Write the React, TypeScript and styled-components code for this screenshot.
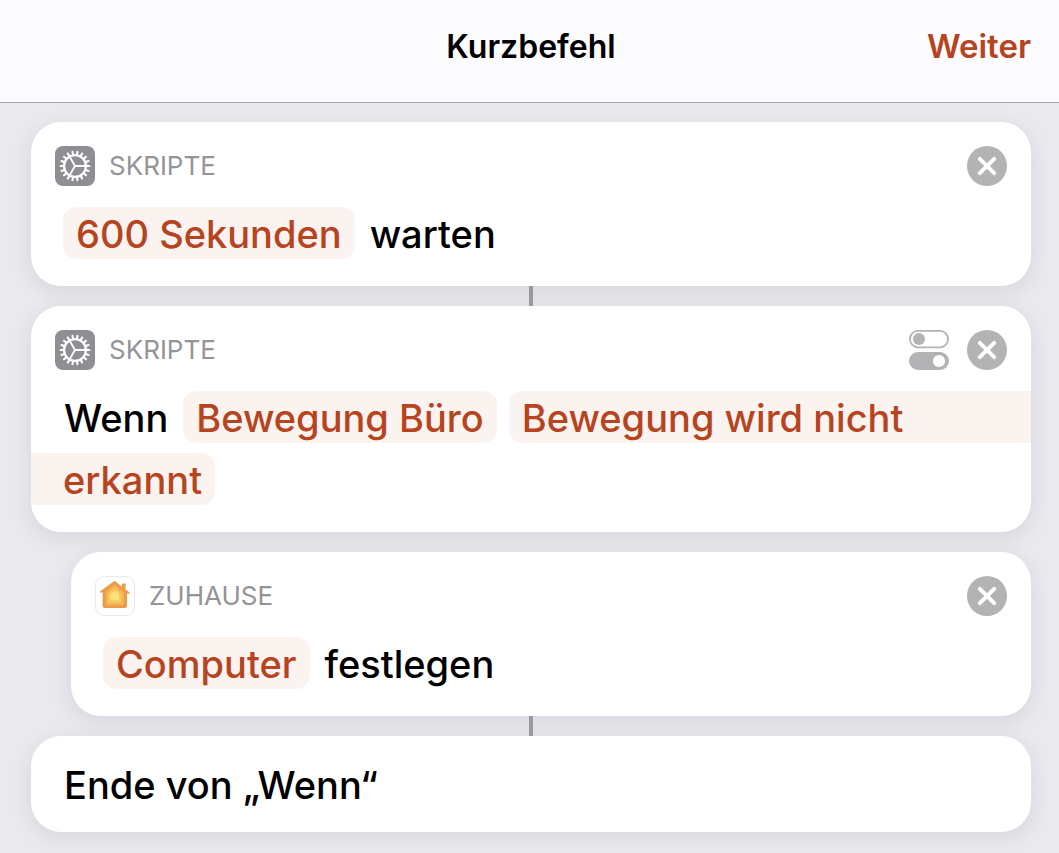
import React from "react";
import styled, { createGlobalStyle } from "styled-components";

const accent = "#b5441f";
const tint = "#fbf3ef";
const muted = "#b3b3b5";

const GlobalStyle = createGlobalStyle`
  *, *::before, *::after { box-sizing: border-box; }
  body {
    margin: 0;
    background: #e9e9ee;
    color: #000;
    font-family: Inter, "Liberation Sans", sans-serif;
  }
  button { border: 0; margin: 0; font: inherit; cursor: pointer; }
`;

const NavBar = styled.header`
  display: grid;
  grid-template-columns: 1fr auto 1fr;
  align-items: baseline;
  align-content: center;
  min-height: 103px;
  padding: 0 28px 10px 31px;
  background: #fcfcfe;
  border-bottom: 1px solid #a5a5aa;
`;

const Title = styled.h1`
  grid-column: 2;
  margin: 0;
  font-size: 32px;
  line-height: 40px;
  font-weight: 600;
`;

const NextButton = styled.button`
  justify-self: end;
  padding: 0;
  background: none;
  color: ${accent};
  && { font-size: 33px; line-height: 40px; font-weight: 600; }
`;

const Flow = styled.main`
  display: flex;
  flex-direction: column;
  padding: 19px 28px 21px 31px;
`;

const Card = styled.section<{ $nested?: boolean }>`
  margin-left: ${(p) => (p.$nested ? 40 : 0)}px;
  padding: 24px 24px 27px;
  border-radius: 30px;
  background: #fff;
  box-shadow: 0 5px 20px rgba(40, 40, 60, 0.1);
`;

const EndCard = styled(Card)`
  padding: 22px 24px;
`;

const Connector = styled.div<{ $line?: boolean }>`
  position: relative;
  align-self: center;
  width: 4px;
  height: 20px;
  background: ${(p) => (p.$line ? "#98989f" : "transparent")};
`;

const CardHeader = styled.header`
  display: flex;
  align-items: center;
  height: 40px;
  margin-bottom: 21px;
`;

const Category = styled.h2`
  flex: 1;
  margin: 0 0 0 14px;
  color: #949497;
  font-size: 26px;
  line-height: 40px;
  font-weight: 400;
`;

const IconButton = styled.button`
  display: flex;
  padding: 0;
  margin-left: 18px;
  background: none;
`;

const Statement = styled.p`
  display: flex;
  flex-wrap: wrap;
  gap: 10px 12px;
  margin: 0;
  padding: 0 8px;
  font-size: 38px;
  line-height: 50px;
  font-weight: 500;
`;

const Word = styled.span`
  padding: 2px 3px 0;
  &:first-child { padding-left: 1px; }
`;

const Chip = styled.button`
  padding: 2px 13px 0;
  border-radius: 14px;
  background: ${tint};
  color: ${accent};
`;

const WrappedChip = styled.button`
  display: contents;
  color: ${accent};
`;

/* The two halves of a value that runs over the line end bleed to the card's edges. */
const ChipStart = styled.span`
  flex: 1;
  margin-right: -32px;
  padding: 2px 0 0 13px;
  border-radius: 14px 0 0 14px;
  background: ${tint};
  text-align: left;
  white-space: nowrap;
`;

const ChipEnd = styled.span`
  margin-left: -32px;
  padding: 2px 13px 0 32px;
  border-radius: 0 14px 14px 0;
  background: ${tint};
`;

const teeth = Array.from({ length: 18 }, (_, i) => i * 20);

const GearIcon = () => (
  <svg width="40" height="40" viewBox="0 0 40 40" aria-hidden="true">
    <rect width="40" height="40" rx="8" fill="#8e8e93" />
    <g fill="none" stroke="#fff">
      <circle cx="20" cy="20" r="10.9" strokeWidth="2.2" />
      {teeth.map((a) => (
        <path key={a} d="M20 8.6V5.6" strokeWidth="2.1" strokeLinecap="round" transform={`rotate(${a + 10} 20 20)`} />
      ))}
      <path d="M20 20h11M20 20l-5.5-9.5M20 20l-5.5 9.5" strokeWidth="1.8" />
    </g>
  </svg>
);

const HomeIcon = () => (
  <svg width="40" height="40" viewBox="0 0 40 40" aria-hidden="true">
    <rect x=".5" y=".5" width="39" height="39" rx="8.5" fill="#fff" stroke="#e9e9eb" />
    <path
      d="M19.800 5 27 10.800V8.200q0-.7.7-.7h2.200q.7 0 .7.700v5.400l4 3q.8 1-.3 1H32V29.800q0 2.300-2.300 2.300H9.900Q7.600 32.100 7.600 29.800V16.600H5.300q-1.100 0-.3-1L18.600 5.400q.7-.6 1.200-.4Z"
      fill="#eb9b48"
    />
    <path d="M19.800 8.600 29.200 16.300V28q0 1.800-1.800 1.800H12.100q-1.800 0-1.800-1.800V16.300Z" fill="#f3b052" />
    <path d="M19.800 11.500 26.700 17.300V26.100q0 1.400-1.400 1.400H14.100q-1.400 0-1.400-1.400V17.300Z" fill="#f8c65f" />
    <path d="M19.800 14.400 24 18V23.600q0 1-1 1H16.500q-1 0-1-1V18Z" fill="#fce17a" />
  </svg>
);

const CloseIcon = () => (
  <svg width="40" height="40" viewBox="0 0 40 40" aria-hidden="true">
    <circle cx="20" cy="20" r="20" fill={muted} />
    <path d="M12.800 12.800 27.200 27.200M27.200 12.800 12.800 27.200" stroke="#fff" strokeWidth="4" strokeLinecap="round" />
  </svg>
);

const SwitchesIcon = () => (
  <svg width="40" height="40" viewBox="0 0 40 40" aria-hidden="true">
    <rect x=".9" y=".9" width="38.200" height="16.400" rx="8.200" fill="#fff" stroke={muted} strokeWidth="1.800" />
    <circle cx="10" cy="9.100" r="6" fill={muted} />
    <rect y="22" width="40" height="18" rx="9" fill={muted} />
    <circle cx="30" cy="31" r="6.100" fill="#fff" />
  </svg>
);

const RemoveButton = () => (
  <IconButton type="button" aria-label="Aktion entfernen">
    <CloseIcon />
  </IconButton>
);

export default function App() {
  return (
    <>
      <GlobalStyle />
      <NavBar>
        <Title>Kurzbefehl</Title>
        <NextButton type="button">Weiter</NextButton>
      </NavBar>
      <Flow>
        <Card>
          <CardHeader>
            <GearIcon />
            <Category>SKRIPTE</Category>
            <RemoveButton />
          </CardHeader>
          <Statement>
            <Chip type="button">600 Sekunden</Chip>
            <Word>warten</Word>
          </Statement>
        </Card>
        <Connector $line />
        <Card>
          <CardHeader>
            <GearIcon />
            <Category>SKRIPTE</Category>
            <IconButton type="button" aria-label="Optionen">
              <SwitchesIcon />
            </IconButton>
            <RemoveButton />
          </CardHeader>
          <Statement>
            <Word>Wenn</Word>
            <Chip type="button">Bewegung Büro</Chip>
            <WrappedChip type="button">
              <ChipStart>Bewegung wird nicht</ChipStart>
              <ChipEnd>erkannt</ChipEnd>
            </WrappedChip>
          </Statement>
        </Card>
        <Connector />
        <Card $nested>
          <CardHeader>
            <HomeIcon />
            <Category>ZUHAUSE</Category>
            <RemoveButton />
          </CardHeader>
          <Statement>
            <Chip type="button">Computer</Chip>
            <Word>festlegen</Word>
          </Statement>
        </Card>
        <Connector $line />
        <EndCard>
          <Statement>
            <Word>Ende von „Wenn“</Word>
          </Statement>
        </EndCard>
      </Flow>
    </>
  );
}
